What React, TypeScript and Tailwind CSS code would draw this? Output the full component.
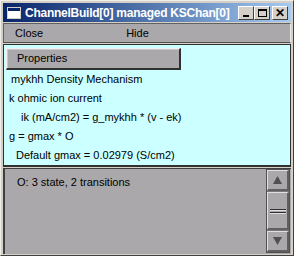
export default function App() {
  const font = { fontFamily: '"Liberation Sans", Arial, sans-serif' };
  return (
    <div
      className="w-[294px] h-[256px] bg-[#d4d0c8] border-t border-l border-t-[#f0eee8] border-l-[#f0eee8] border-r border-b border-r-[#404040] border-b-[#404040] flex flex-col pt-[2px] pl-[2px] pr-[2px] text-black"
      style={font}
    >
      {/* title bar */}
      <div className="h-[19px] flex items-center bg-gradient-to-r from-[#0a246a] to-[#a6caf0] pl-[4px] pr-[3px]">
        <div className="w-[14px] h-[12px] bg-white border border-[#d4d0c8] flex flex-col">
          <div className="h-[3px] bg-[#0a246a]" />
        </div>
        <div className="ml-[4px] text-white font-bold text-[12px] leading-none whitespace-nowrap tracking-[-0.25px]">
          ChannelBuild[0] managed KSChan[0]
        </div>
        <div className="ml-auto flex items-center">
          <TitleBtn>
            <div className="w-[6px] h-[2px] bg-black mt-[6px]" />
          </TitleBtn>
          <TitleBtn>
            <div className="w-[9px] h-[8px] border border-black border-t-2" />
          </TitleBtn>
          <div className="w-[2px]" />
          <TitleBtn>
            <span className="text-[12px] font-bold leading-none">✕</span>
          </TitleBtn>
        </div>
      </div>
      {/* menubar */}
      <div className="mt-[1px] h-[20px] bg-[#aaa8aa] border border-t-[#606060] border-l-[#606060] border-r-[#e8e8e8] border-b-[#505050] flex items-center text-[11px]">
        <span className="ml-[11px]">Close</span>
        <span className="ml-[83px]">Hide</span>
      </div>
      {/* cyan panel */}
      <div className="mt-[1px] h-[123px] bg-[#ccffff] border border-[#303030] border-b-2 flex flex-col text-[11px] leading-none">
        <div className="mt-[3px] ml-[2px] w-[175px] h-[22px] bg-[#aaa8aa] border border-t-[#f0f0f0] border-l-[#f0f0f0] border-r-2 border-b-2 border-r-[#303030] border-b-[#303030] flex items-center pl-[10px] shadow-[inset_1px_1px_0_#c8c8c8]">
          Properties
        </div>
        <div className="ml-[7px] h-[19px] flex items-center">mykhh Density Mechanism</div>
        <div className="ml-[5px] h-[19px] flex items-center">k ohmic ion current</div>
        <div className="ml-[17px] h-[19px] flex items-center">ik (mA/cm2) = g_mykhh * (v - ek)</div>
        <div className="ml-[5px] h-[19px] flex items-center">g = gmax * O</div>
        <div className="ml-[12px] h-[19px] flex items-center">Default gmax = 0.02979 (S/cm2)</div>
      </div>
      {/* gray panel */}
      <div className="mt-[1px] h-[86px] bg-[#aaa8aa] border-l-2 border-t border-l-[#404040] border-t-[#404040] flex text-[11px]">
        <div className="flex-1 pl-[12px] pt-[5px]">O: 3 state, 2 transitions</div>
        <div className="w-[24px] flex flex-col bg-[#7a787a] border border-[#505050] mr-[1px] mb-[1px]">
          <ScrollBtn up />
          <div className="flex-1 mt-[1px] mb-[1px] bg-[#aaa8aa] border border-t-[#e0e0e0] border-l-[#e0e0e0] border-r-2 border-b-2 border-r-[#606060] border-b-[#606060] flex flex-col items-center justify-center gap-[2px]">
            <div className="w-[16px] h-[1px] bg-[#303030] shadow-[0_1px_0_#e0e0e0]" />
            <div className="w-[16px] h-[1px] bg-[#303030] shadow-[0_1px_0_#e0e0e0]" />
          </div>
          <ScrollBtn />
        </div>
      </div>
    </div>
  );
}

function TitleBtn({ children }: { children: React.ReactNode }) {
  return (
    <div className="w-[16px] h-[14px] bg-[#d4d0c8] border border-t-white border-l-white border-r-[#404040] border-b-[#404040] flex items-center justify-center">
      {children}
    </div>
  );
}

function ScrollBtn({ up }: { up?: boolean }) {
  return (
    <div className="h-[21px] bg-[#aaa8aa] border border-t-[#e0e0e0] border-l-[#e0e0e0] border-r-2 border-b-2 border-r-[#606060] border-b-[#606060] flex items-center justify-center">
      <svg width="11" height="10" viewBox="0 0 11 10">
        {up ? (
          <polygon points="5.5,1 10,9 1,9" fill="#505050" />
        ) : (
          <polygon points="1,1 10,1 5.5,9" fill="#505050" />
        )}
      </svg>
    </div>
  );
}
